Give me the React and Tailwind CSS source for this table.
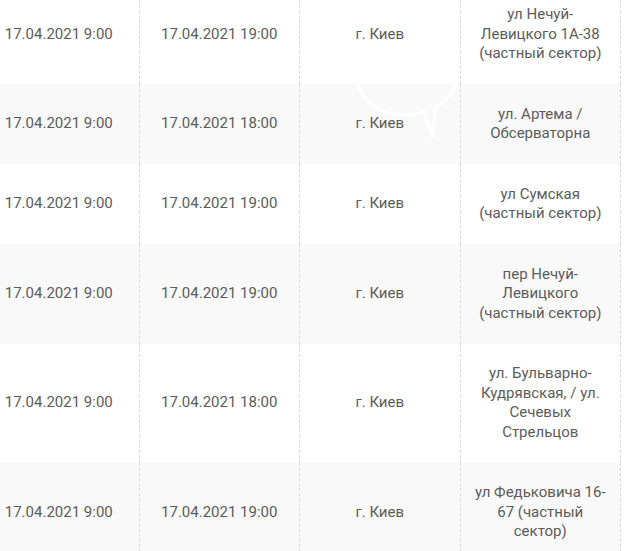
const ROWS = [
  { from: '17.04.2021 9:00', to: '17.04.2021 19:00', city: 'г. Киев', street: 'ул Нечуй-Левицкого 1А-38 (частный сектор)' },
  { from: '17.04.2021 9:00', to: '17.04.2021 18:00', city: 'г. Киев', street: 'ул. Артема / Обсерваторна' },
  { from: '17.04.2021 9:00', to: '17.04.2021 19:00', city: 'г. Киев', street: 'ул Сумская (частный сектор)' },
  { from: '17.04.2021 9:00', to: '17.04.2021 19:00', city: 'г. Киев', street: 'пер Нечуй-Левицкого (частный сектор)' },
  { from: '17.04.2021 9:00', to: '17.04.2021 18:00', city: 'г. Киев', street: 'ул. Бульварно-Кудрявская, / ул. Сечевых Стрельцов' },
  { from: '17.04.2021 9:00', to: '17.04.2021 19:00', city: 'г. Киев', street: 'ул Федьковича 16-67 (частный сектор)' },
];

const cell = 'flex items-center justify-center border-r border-dashed border-[#d9d9d9] px-[14px] py-[20.5px] text-center';

export default function App() {
  return (
    <div className="relative h-[551px] w-[625px] overflow-hidden bg-white font-['Roboto','Liberation_Sans',sans-serif] text-[15px] leading-[19.5px] text-[#5c5c5c]">
      <div className="-mt-[15.5px] -ml-[21px] w-[642px]">
        {ROWS.map((row, i) => (
          <div key={i} className={`grid grid-cols-4 ${i % 2 === 1 ? 'bg-[#f9f9f9]' : 'bg-white'}`}>
            <div className={cell}>{row.from}</div>
            <div className={cell}>{row.to}</div>
            <div className={cell}>{row.city}</div>
            <div className={cell}>{row.street}</div>
          </div>
        ))}
      </div>

      {/* faint watermark, lower half of a speech bubble on the grey row */}
      <svg className="pointer-events-none absolute top-[30px] left-[350px] h-[115px] w-[110px]" viewBox="0 0 110 115" fill="none" stroke="white" strokeWidth="3">
        <path d="M8 36c-1 3-1 6-1 9 0 22 20 40 47 40 8 0 14-1 20-3l9 26 2-30c14-8 21-20 21-33 0-3 0-6-1-9" />
      </svg>
    </div>
  );
}
